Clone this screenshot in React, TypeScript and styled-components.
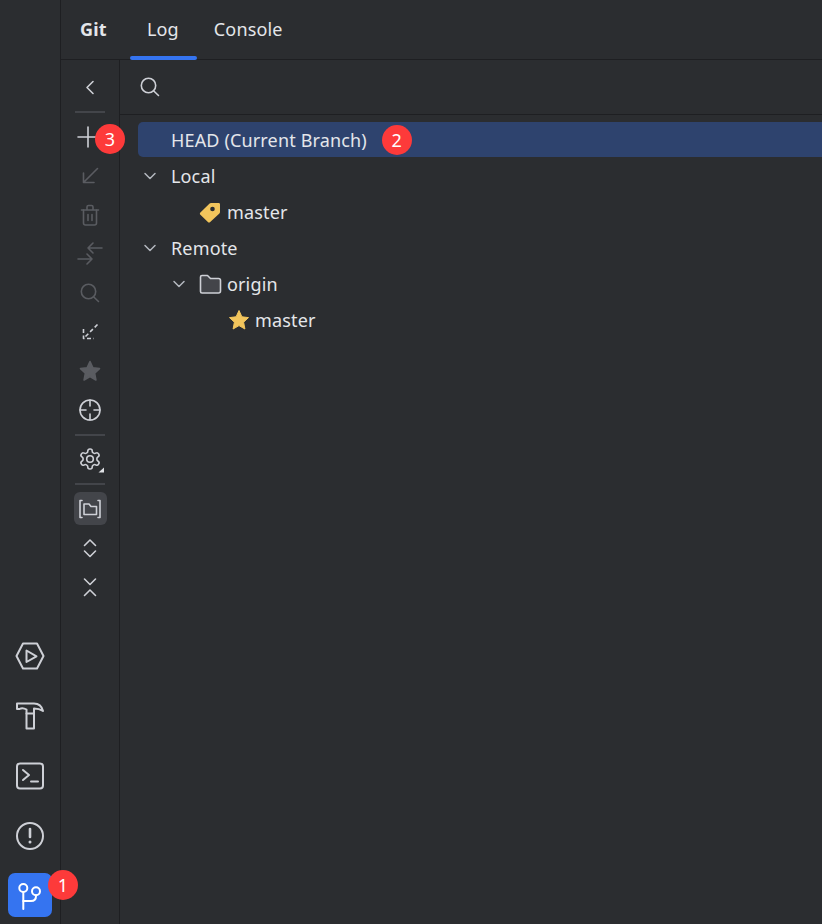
import React from 'react';
import styled, { createGlobalStyle } from 'styled-components';

const GlobalStyle = createGlobalStyle`
    html, body {
        margin: 0;
        padding: 0;
        background: #2b2d30;
        overflow: hidden;
    }
`;

const AppFrame = styled.div`
    display: flex;
    width: 822px;
    height: 924px;
    background: #2b2d30;
    color: #e4e6ea;
    font-family: 'Noto Sans', 'Open Sans', sans-serif;
    font-size: 18px;
    letter-spacing: 0.15px;
    overflow: hidden;
`;

const Rail = styled.div`
    flex: none;
    width: 60px;
    display: flex;
    flex-direction: column;
    justify-content: flex-end;
    align-items: center;
    gap: 16px;
    padding-bottom: 7px;
    border-right: 1px solid #1e1f22;
`;

const RailButton = styled.div<{ $active?: boolean }>`
    position: relative;
    width: 44px;
    height: 44px;
    margin-top: ${props => (props.$active ? '-1px' : '0')};
    display: flex;
    align-items: center;
    justify-content: center;
    border-radius: 7px;
    color: ${props => (props.$active ? '#ffffff' : '#ced0d6')};
    background: ${props => (props.$active ? '#3574f0' : 'transparent')};
`;

const Main = styled.div`
    flex: 1;
    min-width: 0;
    display: flex;
    flex-direction: column;
`;

const Header = styled.div`
    flex: none;
    height: 59px;
    display: flex;
    padding-left: 19px;
    border-bottom: 1px solid #1e1f22;
`;

const Title = styled.div`
    display: flex;
    align-items: center;
    width: 50px;
    padding-bottom: 2px;
    font-weight: 700;
`;

const Tab = styled.div<{ $active?: boolean }>`
    position: relative;
    display: flex;
    align-items: center;
    padding: 0 18px 2px 17px;

    ${props =>
        props.$active &&
        `
        &::after {
            content: '';
            position: absolute;
            left: 0;
            right: 0;
            bottom: -1px;
            height: 4px;
            border-radius: 2px;
            background: #3574f0;
        }
    `}
`;

const Body = styled.div`
    flex: 1;
    min-height: 0;
    display: flex;
`;

const Toolbar = styled.div`
    flex: none;
    width: 58px;
    display: flex;
    flex-direction: column;
    align-items: stretch;
    padding-top: 8px;
    border-right: 1px solid #1e1f22;
`;

const ToolButton = styled.div<{ $muted?: boolean }>`
    position: relative;
    height: 39px;
    display: flex;
    align-items: center;
    justify-content: center;
    color: ${props => (props.$muted ? '#5a5c61' : '#ced0d6')};
`;

const ToolSelected = styled.div`
    width: 33px;
    height: 33px;
    display: flex;
    align-items: center;
    justify-content: center;
    border-radius: 6px;
    background: #43454a;
`;

const ToolSeparator = styled.div<{ $tall?: boolean; $low?: boolean }>`
    height: ${props => (props.$tall ? 11 : 10)}px;
    display: flex;
    align-items: center;
    justify-content: center;
    padding-top: ${props => (props.$low ? 1 : 0)}px;
    box-sizing: border-box;

    &::before {
        content: '';
        width: 30px;
        height: 2px;
        background: #43454a;
    }
`;

const Content = styled.div`
    flex: 1;
    min-width: 0;
    display: flex;
    flex-direction: column;
`;

const SearchBar = styled.div`
    flex: none;
    height: 54px;
    display: flex;
    align-items: center;
    padding-left: 18px;
    color: #ced0d6;
    border-bottom: 1px solid #1e1f22;
`;

const Tree = styled.div`
    display: flex;
    flex-direction: column;
    padding: 7px 0 0 18px;
`;

const TreeRow = styled.div<{ $indent: number; $selected?: boolean }>`
    height: 35px;
    margin-bottom: 1px;
    display: flex;
    align-items: center;
    padding-left: ${props => props.$indent}px;
    border-radius: 5px 0 0 5px;
    background: ${props => (props.$selected ? '#2e436e' : 'transparent')};
`;

const Twisty = styled.svg<{ $gap: number }>`
    flex: none;
    width: 16px;
    height: 16px;
    margin-right: ${props => props.$gap}px;
    color: #b4b8bf;
`;

const TreeIcon = styled.svg<{ $gap?: number }>`
    flex: none;
    width: 24px;
    height: 24px;
    margin-right: ${props => props.$gap ?? 5}px;
`;

const Badge = styled.div`
    flex: none;
    width: 30px;
    height: 30px;
    display: flex;
    align-items: center;
    justify-content: center;
    border-radius: 50%;
    background: #fd3a3a;
    color: #ffffff;
    font-size: 18px;
    line-height: 1;
`;

const RowBadge = styled(Badge)`
    margin-left: 15px;
`;

const FloatingBadge = styled(Badge)<{ $left: number; $top: number }>`
    position: absolute;
    left: ${props => props.$left}px;
    top: ${props => props.$top}px;
`;

interface IconProps {
    children: React.ReactNode;
    size?: number;
}

const Icon: React.FC<IconProps> = ({ children, size = 24 }) => (
    <svg
        width={size}
        height={size}
        viewBox={`0 0 ${size} ${size}`}
        fill="none"
        stroke="currentColor"
        strokeWidth={size === 32 ? 2 : 1.6}
        strokeLinecap="round"
        strokeLinejoin="round"
        style={{ overflow: 'visible' }}
    >
        {children}
    </svg>
);

const SearchIcon = () => (
    <Icon>
        <circle cx="10.5" cy="10.5" r="7.2" />
        <path d="M15.8 16L20.5 20.5" />
    </Icon>
);

const STAR_PATH = 'M12 2.5L14.9 8.8L21.5 9.6L16.6 14.2L17.9 21L12 17.6L6.1 21L7.4 14.2L2.5 9.6L9.1 8.8Z';

const GEAR_PATH =
    'M12.22 2h-.44a2 2 0 0 0-2 2v.18a2 2 0 0 1-1 1.73l-.43.25a2 2 0 0 1-2 0l-.15-.08a2 2 0 0 0-2.73.73l-.22.38a2 2 0 0 0 .73 2.73l.15.1a2 2 0 0 1 1 1.72v.51a2 2 0 0 1-1 1.74l-.15.09a2 2 0 0 0-.73 2.73l.22.38a2 2 0 0 0 2.73.73l.15-.08a2 2 0 0 1 2 0l.43.25a2 2 0 0 1 1 1.73V20a2 2 0 0 0 2 2h.44a2 2 0 0 0 2-2v-.18a2 2 0 0 1 1-1.73l.43-.25a2 2 0 0 1 2 0l.15.08a2 2 0 0 0 2.73-.73l.22-.39a2 2 0 0 0-.73-2.73l-.15-.08a2 2 0 0 1-1-1.74v-.5a2 2 0 0 1 1-1.74l.15-.09a2 2 0 0 0 .73-2.73l-.22-.38a2 2 0 0 0-2.73-.73l-.15.08a2 2 0 0 1-2 0l-.43-.25a2 2 0 0 1-1-1.73V4a2 2 0 0 0-2-2z';

const Chevron = ({ gap }: { gap: number }) => (
    <Twisty $gap={gap} viewBox="0 0 16 16" fill="none" stroke="currentColor" strokeWidth="1.5" strokeLinecap="round" strokeLinejoin="round">
        <path d="M3 5.5L8 10.5L13 5.5" />
    </Twisty>
);

const App: React.FC = () => {
    return (
        <AppFrame>
            <GlobalStyle />
            <Rail>
                <RailButton>
                    <Icon size={32}>
                        <path d="M2.5 16L9 3.5H23L29.5 16L23 28.5H9Z" />
                        <path d="M12.5 10.5V22L22.5 16.3Z" />
                    </Icon>
                </RailButton>
                <RailButton>
                    <Icon size={32}>
                        <path d="M3 3.5H20C25 3.5 28 7 29 11C26 9 23 8.5 20 8.5V28.5H12.5V9.5C10 8 7 8 5.5 9H3Z" />
                        <path d="M12.5 13.5H20" />
                    </Icon>
                </RailButton>
                <RailButton>
                    <Icon size={32}>
                        <rect x="3" y="3.5" width="26" height="25" rx="3" />
                        <path d="M9 10L15 15L9 20" />
                        <path d="M17 21.5H24" />
                    </Icon>
                </RailButton>
                <RailButton>
                    <Icon size={32}>
                        <circle cx="16" cy="16" r="13" />
                        <path d="M16 9V17" strokeWidth="2.6" />
                        <path d="M16 22V22.1" strokeWidth="3" />
                    </Icon>
                </RailButton>
                <RailButton $active>
                    <Icon size={32}>
                        <circle cx="9.3" cy="9" r="4" />
                        <circle cx="22" cy="12.3" r="4" />
                        <path d="M9.3 13V30" />
                        <path d="M22 16.3V17C22 20 20 22 17 22H9.3" />
                    </Icon>
                    <FloatingBadge $left={40} $top={-3}>1</FloatingBadge>
                </RailButton>
            </Rail>

            <Main>
                <Header>
                    <Title>Git</Title>
                    <Tab $active>Log</Tab>
                    <Tab>Console</Tab>
                </Header>

                <Body>
                    <Toolbar>
                        <ToolButton>
                            <Icon><path d="M15 5.5L9 11.5L15 17.5" /></Icon>
                        </ToolButton>
                        <ToolSeparator />
                        <ToolButton>
                            <Icon><path d="M10 2V22M0 12H20" /></Icon>
                            <FloatingBadge $left={34} $top={7}>3</FloatingBadge>
                        </ToolButton>
                        <ToolButton $muted>
                            <Icon><path d="M19.5 4.5L5.5 18.5M5.5 9V18.5H16" /></Icon>
                        </ToolButton>
                        <ToolButton $muted>
                            <Icon>
                                <path d="M3.5 7H20.5M9 6.5V4C9 3 9.5 2.5 10.5 2.5H13.5C14.5 2.5 15 3 15 4V6.5" />
                                <path d="M5.5 7V20C5.5 21 6.5 22 7.5 22H16.5C17.5 22 18.5 21 18.5 20V7" />
                                <path d="M10 11.5V17.5M14 11.5V17.5" />
                            </Icon>
                        </ToolButton>
                        <ToolButton $muted>
                            <Icon>
                                <path d="M15 1L10 6L15 11M10 6H24" />
                                <path d="M9 12L14 17L9 22M14 17H0" />
                            </Icon>
                        </ToolButton>
                        <ToolButton $muted>
                            <SearchIcon />
                        </ToolButton>
                        <ToolButton>
                            <Icon>
                                <path d="M19.5 4.5L5.5 18.5" strokeDasharray="4 2.5" strokeLinecap="butt" />
                                <path d="M5.5 9V18.5H16" strokeDasharray="4 2.5" strokeLinecap="butt" />
                            </Icon>
                        </ToolButton>
                        <ToolButton $muted>
                            <Icon><path d={STAR_PATH} fill="currentColor" /></Icon>
                        </ToolButton>
                        <ToolButton>
                            <Icon>
                                <circle cx="12" cy="12" r="10" />
                                <path d="M12 2V8M12 16V22M2 12H8M16 12H22" />
                            </Icon>
                        </ToolButton>
                        <ToolSeparator $low />
                        <ToolButton>
                            <Icon>
                                <path d={GEAR_PATH} />
                                <circle cx="12" cy="12" r="3.3" />
                                <path d="M26 20.5V25.5H20.5Z" fill="#dfe1e5" stroke="none" />
                            </Icon>
                        </ToolButton>
                        <ToolSeparator $tall $low />
                        <ToolButton>
                            <ToolSelected>
                                <Icon>
                                    <path d="M4 3.5H2V20.5H4M20 3.5H22V20.5H20" />
                                    <path d="M6 17.5V7H11L13 9.5H18.5V17.5Z" />
                                </Icon>
                            </ToolSelected>
                        </ToolButton>
                        <ToolButton>
                            <Icon><path d="M6.5 9.5L12 4L17.5 9.5M6.5 15L12 20.5L17.5 15" /></Icon>
                        </ToolButton>
                        <ToolButton>
                            <Icon><path d="M6.5 4L12 9.5L17.5 4M6.5 20.5L12 15L17.5 20.5" /></Icon>
                        </ToolButton>
                    </Toolbar>

                    <Content>
                        <SearchBar>
                            <SearchIcon />
                        </SearchBar>
                        <Tree>
                            <TreeRow $indent={33} $selected>
                                HEAD (Current Branch)
                                <RowBadge>2</RowBadge>
                            </TreeRow>
                            <TreeRow $indent={4}>
                                <Chevron gap={13} />
                                Local
                            </TreeRow>
                            <TreeRow $indent={60}>
                                <TreeIcon viewBox="0 0 24 24">
                                    <path
                                        d="M13 3H20.5C21.5 3 22 3.5 22 4.5V12C22 12.6 21.8 13 21.4 13.4L12.2 22C11.4 22.7 10.6 22.7 9.9 22L2.4 14.8C1.7 14.1 1.7 13.2 2.4 12.5L11.6 3.5C12 3.2 12.4 3 13 3Z"
                                        fill="#f2c55c"
                                    />
                                    <circle cx="14.5" cy="9" r="2.3" fill="#2b2d30" />
                                </TreeIcon>
                                master
                            </TreeRow>
                            <TreeRow $indent={4}>
                                <Chevron gap={13} />
                                Remote
                            </TreeRow>
                            <TreeRow $indent={33}>
                                <Chevron gap={11} />
                                <TreeIcon viewBox="0 0 24 24">
                                    <path
                                        d="M2.5 5C2.5 4 3 3.5 4 3.5H9.5L12.5 6.5H20.5C21.5 6.5 22.5 7.5 22.5 8.5V19C22.5 20 21.5 21 20.5 21H4C3 21 2.5 20.5 2.5 19.5Z"
                                        fill="#43454a"
                                        stroke="#ced0d6"
                                        strokeWidth="1.6"
                                        strokeLinejoin="round"
                                    />
                                </TreeIcon>
                                origin
                            </TreeRow>
                            <TreeRow $indent={89}>
                                <TreeIcon $gap={4} viewBox="0 0 24 24">
                                    <path d={STAR_PATH} fill="#f2c55c" stroke="#f2c55c" strokeWidth="1" strokeLinejoin="round" />
                                </TreeIcon>
                                master
                            </TreeRow>
                        </Tree>
                    </Content>
                </Body>
            </Main>
        </AppFrame>
    );
};

export default App;
